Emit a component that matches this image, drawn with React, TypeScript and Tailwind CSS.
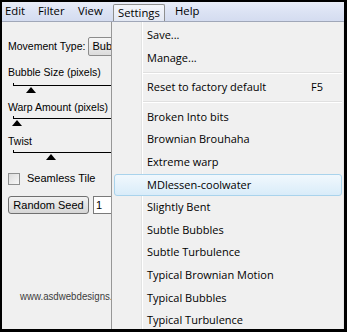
import React from "react";

const MENU_FONT = { fontFamily: '"Open Sans", "Noto Sans", sans-serif' };
const PANEL_FONT = { fontFamily: '"Liberation Sans", Arial, sans-serif' };

const PRESETS = [
  "Broken Into bits",
  "Brownian Brouhaha",
  "Extreme warp",
  "MDlessen-coolwater",
  "Slightly Bent",
  "Subtle Bubbles",
  "Subtle Turbulence",
  "Typical Brownian Motion",
  "Typical Bubbles",
  "Typical Turbulence",
];

function Slider({ thumb }: { thumb: number }) {
  // line with a small tick on the left and a black up-pointing thumb below it
  return (
    <div className="relative h-[10px] ml-[5px]">
      <div className="absolute left-0 top-0 h-[3px] w-px bg-black" />
      <div className="absolute left-0 right-0 top-[2px] h-px bg-black" />
      <div
        className="absolute top-[4px] h-0 w-0 border-x-[5px] border-b-[6px] border-x-transparent border-b-black"
        style={{ left: thumb - 5 }}
      />
    </div>
  );
}

function MenuItem({ label, hint, active }: { label: string; hint?: string; active?: boolean }) {
  return (
    <div
      className={`flex h-[22.6px] items-center ml-[2px] pl-[32px] pr-[18px] text-[11px] text-black rounded-[3px] border ${
        active ? "border-[#a9d3ec] bg-gradient-to-b from-[#f1f8fd] to-[#d9ecf9]" : "border-transparent"
      }`}
    >
      <span>{label}</span>
      {hint && <span className="ml-auto">{hint}</span>}
    </div>
  );
}

function Separator() {
  return (
    <div className="flex h-[7px] flex-col justify-center pl-[31px]">
      <div className="h-px bg-[#e0e0e0]" />
      <div className="h-px bg-white" />
    </div>
  );
}

export default function App() {
  return (
    <div className="h-[332px] w-[347px] bg-black pt-[2px] pl-[2px] pr-[3px] pb-[3px]">
      <div className="relative flex h-full flex-col overflow-hidden bg-[#f0f0f0]">
        {/* menu bar */}
        <div
          className="flex h-[20px] shrink-0 items-stretch border-b border-[#a0a7b8] bg-gradient-to-b from-[#e9edf8] via-[#dce3f4] to-[#d4dcf0] pl-[3px] text-[11.3px] text-black"
          style={MENU_FONT}
        >
          <div className="flex w-[33px] items-center">Edit</div>
          <div className="flex w-[40px] items-center">Filter</div>
          <div className="flex w-[35px] items-center">View</div>
          <div className="mt-[2px] flex w-[52px] items-center rounded-t-[2px] border border-b-0 border-[#8e8f8f] bg-gradient-to-b from-[#f4f6fb] to-[#e3e8f3] pl-[4px]">
            Settings
          </div>
          <div className="ml-[10px] flex items-center">Help</div>
        </div>

        {/* plugin options panel */}
        <div className="flex flex-col pl-[6px] text-[10.5px] text-black" style={PANEL_FONT}>
          <div className="mt-[15px] flex h-[19px] items-center">
            <span>Movement Type:</span>
            <div className="ml-[3px] flex h-[19px] w-[80px] items-center rounded-[2px] border border-[#8c8c8c] bg-gradient-to-b from-[#f6f6f6] to-[#dcdcdc] pl-[3px] text-[11px]">
              Bubbles
            </div>
          </div>
          <div className="mt-[10px] h-[13px] leading-[13px]">Bubble Size (pixels)</div>
          <div className="mt-[4px]">
            <Slider thumb={18} />
          </div>
          <div className="mt-[8px] h-[13px] leading-[13px]">Warp Amount (pixels)</div>
          <div className="mt-[2px]">
            <Slider thumb={4} />
          </div>
          <div className="mt-[9px] h-[13px] leading-[13px]">Twist</div>
          <div className="mt-[2px]">
            <Slider thumb={38} />
          </div>
          <div className="mt-[12px] flex h-[13px] items-center">
            <div className="h-[12px] w-[12px] border border-[#8e8f8f] bg-gradient-to-br from-[#dcdcdc] to-[#f8f8f8]" />
            <span className="ml-[7px] text-[11px]">Seamless Tile</span>
          </div>
          <div className="mt-[11px] flex h-[18px] items-center">
            <div className="flex h-[18px] w-[81px] items-center justify-center rounded-[3px] border border-[#707070] bg-gradient-to-b from-[#f2f2f2] to-[#d6d6d6] text-[11px]">
              Random Seed
            </div>
            <div className="ml-[4px] flex h-[18px] w-[40px] items-center border border-[#7a7a7a] bg-white pl-[2px] text-[11px]">
              1
            </div>
          </div>
          <div className="mt-[75px] ml-[12px] h-[14px] origin-left scale-x-[0.88] text-[11px] text-[#3c3c3c] leading-[14px]">
            www.asdwebdesigns.nl
          </div>
        </div>

        {/* Settings dropdown */}
        <div
          className="absolute top-[20px] left-[109px] right-0 bottom-0 border-l border-[#979797] border-r border-r-[#e6e6e6] bg-[#f0f0f0] pt-[2px] pr-[1px]"
          style={MENU_FONT}
        >
          <div className="absolute top-0 bottom-0 left-[29px] w-px bg-[#e2e3e3]" />
          <div className="absolute top-0 bottom-0 left-[30px] w-px bg-white" />
          <div className="relative flex flex-col">
            <MenuItem label="Save..." />
            <MenuItem label="Manage..." />
            <Separator />
            <MenuItem label="Reset to factory default" hint="F5" />
            <Separator />
            {PRESETS.map((p) => (
              <MenuItem key={p} label={p} active={p === "MDlessen-coolwater"} />
            ))}
          </div>
        </div>
      </div>
    </div>
  );
}
